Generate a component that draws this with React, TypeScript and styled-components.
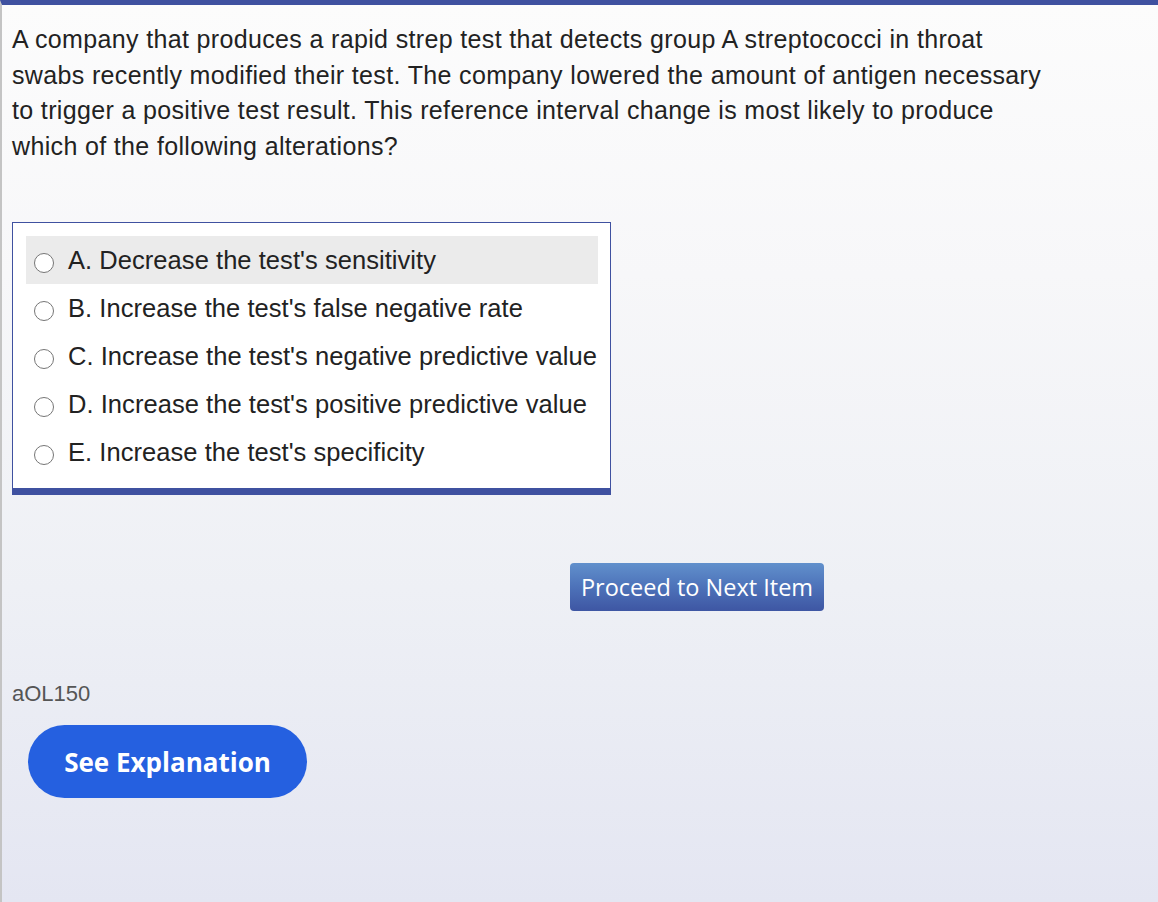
import React from 'react';
import styled, { createGlobalStyle } from 'styled-components';

const GlobalStyle = createGlobalStyle`
  html, body {
    margin: 0;
    padding: 0;
  }
  body {
    font-family: 'Liberation Sans', Arial, sans-serif;
    color: #222;
  }
`;

const questionLines = [
  'A company that produces a rapid strep test that detects group A streptococci in throat',
  'swabs recently modified their test. The company lowered the amount of antigen necessary',
  'to trigger a positive test result. This reference interval change is most likely to produce',
  'which of the following alterations?',
];

const choices = [
  "A. Decrease the test's sensitivity",
  "B. Increase the test's false negative rate",
  "C. Increase the test's negative predictive value",
  "D. Increase the test's positive predictive value",
  "E. Increase the test's specificity",
];

const App = () => {
  return (
    <>
      <GlobalStyle />
      <Page>
        <Question>
          {questionLines.map((line) => (
            <QuestionLine key={line}>{line}</QuestionLine>
          ))}
        </Question>
        <ChoiceBox>
          {choices.map((choice, i) => (
            <ChoiceRow key={choice} $active={i === 0}>
              <Radio />
              <ChoiceText>{choice}</ChoiceText>
            </ChoiceRow>
          ))}
        </ChoiceBox>
        <NextRow>
          <NextButton>Proceed to Next Item</NextButton>
        </NextRow>
        <ItemId>aOL150</ItemId>
        <ExplainButton>See Explanation</ExplainButton>
      </Page>
    </>
  );
};

export default App;

const Page = styled.div`
  box-sizing: border-box;
  width: 1158px;
  height: 902px;
  border-top: 5px solid #3f51a0;
  border-left: 2px solid #c4c4c4;
  background: linear-gradient(to bottom, #fcfcfc 0%, #f7f7f9 30%, #eef0f5 65%, #e4e6f2 100%);
  padding: 17px 0 0 10px;
  display: flex;
  flex-direction: column;
  align-items: flex-start;
  overflow: hidden;
`;

const Question = styled.div`
  margin: 0;
  font-size: 25px;
  letter-spacing: 0.35px;
  line-height: 35.5px;
  color: #222;
`;

const QuestionLine = styled.div`
  white-space: nowrap;
`;

const ChoiceBox = styled.div`
  box-sizing: border-box;
  margin-top: 58px;
  width: 599px;
  background: #fff;
  border: 1px solid #3f51a0;
  border-bottom: 7px solid #3f51a0;
  padding: 13px 12px 12px 13px;
  display: flex;
  flex-direction: column;
`;

const ChoiceRow = styled.div<{ $active: boolean }>`
  height: 48px;
  display: flex;
  align-items: center;
  gap: 14px;
  padding-left: 8px;
  background: ${(props) => (props.$active ? '#ebebeb' : 'transparent')};
`;

const Radio = styled.span`
  box-sizing: border-box;
  width: 20px;
  height: 20px;
  margin-top: 5px;
  border-radius: 50%;
  border: 1.5px solid #767676;
  background: #fff;
  flex-shrink: 0;
`;

const ChoiceText = styled.span`
  font-size: 25.5px;
  letter-spacing: 0.05px;
  color: #222;
  white-space: nowrap;
`;

const NextRow = styled.div`
  margin-top: 68px;
  padding-left: 558px;
`;

const NextButton = styled.button`
  box-sizing: border-box;
  width: 254px;
  height: 48px;
  border: none;
  border-radius: 4px;
  background: linear-gradient(to bottom, #6190cc 0%, #4d72b9 50%, #3e56a3 100%);
  color: #fff;
  font-family: 'Open Sans', sans-serif;
  font-size: 23.5px;
  font-weight: 400;
  padding: 0;
  cursor: pointer;
`;

const ItemId = styled.div`
  margin-top: 70px;
  font-size: 22px;
  color: #555;
`;

const ExplainButton = styled.button`
  margin-top: 18px;
  margin-left: 16px;
  width: 279px;
  height: 73px;
  border: none;
  border-radius: 37px;
  background: #2560e0;
  color: #fff;
  font-family: 'Open Sans', sans-serif;
  font-size: 26px;
  font-weight: 700;
  cursor: pointer;
`;
